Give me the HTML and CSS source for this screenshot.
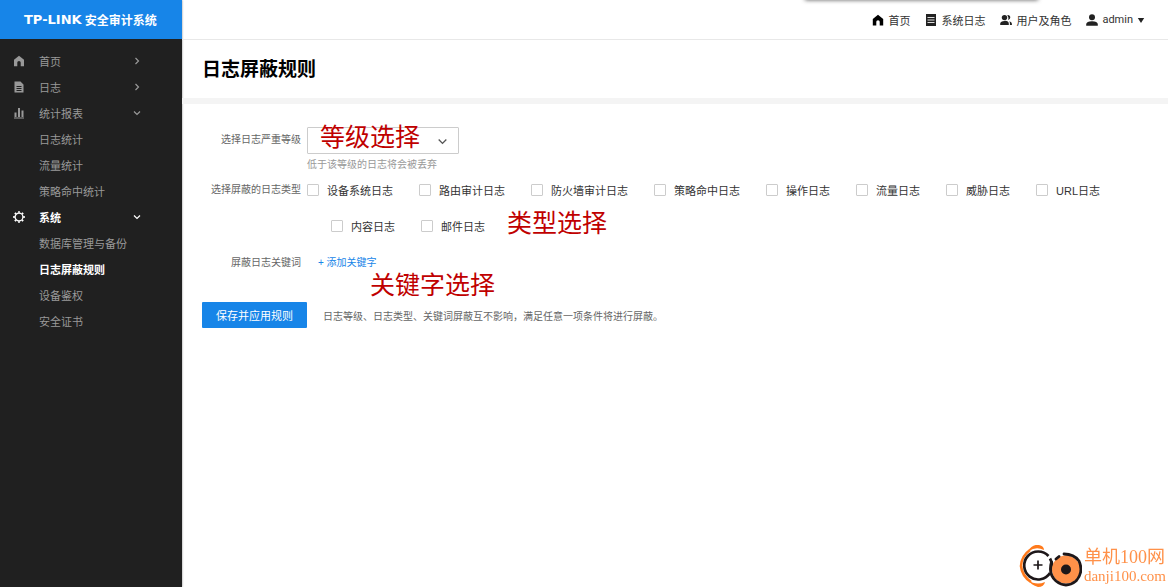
FILE: index.html
```html
<!DOCTYPE html>
<html lang="zh-CN">
<head>
<meta charset="utf-8">
<title>日志屏蔽规则</title>
<link rel="stylesheet" href="styles.css">
</head>
<body>
<div class="app">
  <aside class="sidebar">
    <div class="brand"><span class="brand-mark">TP-LINK</span><span>安全审计系统</span></div>
    <nav class="menu">
      <a class="item" href="#"><svg class="icon" viewBox="0 0 12 12"><path fill="currentColor" d="M6 .8 1 4.8v6.4h3.300V7.600q0-1.500 1.700-1.500t1.700 1.500v3.600H11V4.800z"/></svg><span class="text">首页</span><svg class="arrow" viewBox="0 0 8 8"><path d="M2.500 1l3 3-3 3"/></svg></a>
      <a class="item" href="#"><svg class="icon" viewBox="0 0 12 12"><path fill="currentColor" fill-rule="evenodd" d="M1.500.5h6L10.500 3.500v8h-9zM3.500 5v1h5V5zm0 2v1h5V7zm0 2v1h5V9z"/></svg><span class="text">日志</span><svg class="arrow" viewBox="0 0 8 8"><path d="M2.500 1l3 3-3 3"/></svg></a>
      <a class="item" href="#"><svg class="icon" viewBox="0 0 12 12"><path fill="currentColor" d="M1.500 5.500h2V10h-2zM5 1h2v9H5zm3.500 2.500h2V10h-2zM1 10.600h10v1H1z"/></svg><span class="text">统计报表</span><svg class="arrow" viewBox="0 0 8 8"><path d="M1 2.500l3 3 3-3"/></svg></a>
      <a class="item sub" href="#">日志统计</a>
      <a class="item sub" href="#">流量统计</a>
      <a class="item sub" href="#">策略命中统计</a>
      <a class="item active" href="#"><svg class="icon" viewBox="0 0 12 12"><circle cx="6" cy="6" r="3.900" fill="none" stroke="currentColor" stroke-width="1.300"/><path fill="none" stroke="currentColor" stroke-width="1.900" d="M6 .2v1.600M6 10.200v1.600M.2 6h1.600M10.200 6h1.600M1.900 1.900l1.100 1.100M9 9l1.100 1.100M10.100 1.900 9 3M3 9l-1.100 1.100"/></svg><span class="text">系统</span><svg class="arrow" viewBox="0 0 8 8"><path d="M1 2.500l3 3 3-3"/></svg></a>
      <a class="item sub" href="#">数据库管理与备份</a>
      <a class="item sub active" href="#">日志屏蔽规则</a>
      <a class="item sub" href="#">设备鉴权</a>
      <a class="item sub" href="#">安全证书</a>
    </nav>
  </aside>

  <main class="main">
    <header class="topbar">
      <div class="top-shadow"></div>
      <a class="top-link" href="#"><svg class="icon" viewBox="0 0 12 12"><path fill="#000" d="M6 .8.8 5v6.500h3.500V7.800q0-1.500 1.700-1.500t1.700 1.500v3.700h3.500V5z"/></svg>首页</a>
      <a class="top-link" href="#"><svg class="icon" viewBox="0 0 12 12"><path fill="#222" d="M1 0h10v12H1z"/><path stroke="#ddd" d="M2.500 3.500h7M2.500 6h7M2.500 8.500h7"/></svg>系统日志</a>
      <a class="top-link" href="#"><svg class="icon" viewBox="0 0 12 12"><g fill="#222"><circle cx="4.500" cy="3.600" r="2.700"/><path d="M.2 11V9.500Q.5 7.200 4.500 6.900t4.300 2.600V11zM7.300 1q3-.2 3 2.600 0 1.900-2.300 2.500Q9 3.500 7.300 1zM9.300 7.300q2.600.7 2.600 2.400V11h-2V9.500q0-1.200-.6-2.200z"/></g></svg>用户及角色</a>
      <button class="user" type="button"><svg class="icon" viewBox="0 0 12 12"><circle cx="6" cy="3.300" r="3" fill="#222"/><path fill="#222" d="M.2 11.700V10Q.5 7.500 6 7.200q5.500.3 5.800 2.800v1.700z"/></svg>admin<svg class="caret" viewBox="0 0 8 8"><path fill="#222" d="M.8 2h6.400L4 7z"/></svg></button>
    </header>

    <h1 class="title">日志屏蔽规则</h1>

    <form class="form">
      <div class="row">
        <label class="label level-label" for="level">选择日志严重等级</label>
        <div class="field">
          <div class="select-box">
            <select id="level" class="select"><option></option></select>
            <svg class="select-arrow" viewBox="0 0 8 8"><path d="M.6 2.300 4 5.700l3.400-3.400"/></svg>
            <span class="note note-level">等级选择</span>
          </div>
          <p class="hint">低于该等级的日志将会被丢弃</p>
        </div>
      </div>
      <div class="row" role="group" aria-labelledby="types">
        <span class="label" id="types">选择屏蔽的日志类型</span>
        <div class="field">
          <div class="checks">
            <label class="check"><input type="checkbox">设备系统日志</label>
            <label class="check"><input type="checkbox">路由审计日志</label>
            <label class="check"><input type="checkbox">防火墙审计日志</label>
            <label class="check"><input type="checkbox">策略命中日志</label>
            <label class="check"><input type="checkbox">操作日志</label>
            <label class="check"><input type="checkbox">流量日志</label>
            <label class="check"><input type="checkbox">威胁日志</label>
            <label class="check"><input type="checkbox">URL日志</label>
          </div>
          <div class="checks checks-more">
            <label class="check"><input type="checkbox">内容日志</label>
            <label class="check"><input type="checkbox">邮件日志</label>
            <span class="note note-type">类型选择</span>
          </div>
        </div>
      </div>
      <div class="row keyword-row">
        <span class="label">屏蔽日志关键词</span>
        <div class="field keyword">
          <a class="add" href="#">+ 添加关键字</a>
          <span class="note note-keyword">关键字选择</span>
        </div>
      </div>
      <div class="actions">
        <button class="save" type="button">保存并应用规则</button>
        <span class="remark">日志等级、日志类型、关键词屏蔽互不影响，满足任意一项条件将进行屏蔽。</span>
      </div>
    </form>
  </main>
</div>

<div class="watermark">
  <svg class="wm-logo" viewBox="1 1 64 42">
    <path d="M13 6Q4.500 12 4 22q1 10 10 16" fill="none" stroke="#ff7a1c" stroke-width="2.600"/>
    <path d="M11 7Q15 0 22 1q5 1 5 5-8-4-15 1zM11 36q8 6 17 2-1 5-7 5-7-2-10-7z" fill="#ff7a1c"/>
    <circle cx="21" cy="21" r="14" fill="#fff"/>
    <path d="M31.500 12A14 14 0 1 0 33 29" fill="none" stroke="#1d1719" stroke-width="2.700"/>
    <path d="M33 14.500Q37 22 34 27" fill="none" stroke="#1d1719" stroke-width="2.700"/>
    <path d="M21 16.500v9M16.500 21h9" stroke="#1d1719" stroke-width="1.700"/>
    <circle cx="49" cy="25.500" r="14" fill="#ff9149"/>
    <path d="M34.500 18Q31 30 39 37q10 8 20 0 8-9 3-20-5-7-15-7M39 15l3-2.500" fill="none" stroke="#1d1719" stroke-width="2.800" stroke-linecap="round"/>
    <circle cx="49" cy="25.500" r="5" fill="#1d1719"/>
  </svg>
  <div class="wm-text"><span class="wm-name">单机100网</span><span class="wm-url">danji100.com</span></div>
</div>
</body>
</html>
```
FILE: styles.css
```css
* { box-sizing: border-box; }

body {
  margin: 0;
  background: #fff;
  color: #333;
  font-family: "Liberation Sans", "Noto Sans CJK SC", sans-serif;
  font-size: 11px;
}

a { color: inherit; text-decoration: none; }
button { border: 0; padding: 0; background: none; color: inherit; font: inherit; }

.app { display: flex; min-height: 100vh; }

.sidebar {
  flex: 0 0 182px;
  background: #202020;
  color: #999;
  box-shadow: 0 0 2px #888;
}

.brand {
  display: flex;
  align-items: center;
  gap: 3px;
  height: 39px;
  padding-left: 24px;
  background: #1785e8;
  color: #fff;
  font-weight: bold;
  font-size: 12px;
  white-space: nowrap;
}
.brand-mark { font-family: "DejaVu Sans", sans-serif; font-size: 13px; }

.menu { padding-top: 9px; }
.item {
  display: flex;
  align-items: center;
  height: 26px;
  padding: 0 41px 0 13px;
}
.sub { padding-left: 39px; }
.active { color: #fff; font-weight: bold; }
.icon { flex: none; width: 12px; height: 12px; }
.text { flex: 1; margin-left: 14px; }
.arrow { width: 8px; height: 8px; }
.arrow path, .select-arrow path { fill: none; stroke: currentColor; stroke-width: 1.2; }

.main { flex: 1; min-width: 0; }

.topbar {
  position: relative;
  display: flex;
  align-items: center;
  justify-content: flex-end;
  gap: 15px;
  height: 40px;
  padding-right: 23px;
  border-bottom: 1px solid #e8e8e8;
}
.top-shadow {
  position: absolute;
  top: -4px;
  right: 130px;
  width: 233px;
  height: 4px;
  box-shadow: 0 0 4px #555;
}
.top-link, .user { display: flex; align-items: center; gap: 4px; }
.user { font-family: Roboto, sans-serif; }
.caret { width: 8px; height: 8px; }

.title {
  margin: 0;
  height: 64px;
  padding-left: 20px;
  border-bottom: 6px solid #f4f4f4;
  color: #000;
  font-size: 19px;
  line-height: 60px;
}

.form { padding: 23px 20px; }
.row { display: grid; grid-template-columns: 99px 1fr; column-gap: 6px; }
.label {
  color: #666;
  font-size: 10px;
  line-height: 36px;
  text-align: right;
  white-space: nowrap;
}
.level-label { line-height: 26px; }

.select-box { position: relative; width: 152px; }
.select {
  display: block;
  width: 100%;
  height: 27px;
  padding: 0 24px 0 12px;
  border: 1px solid #ccc;
  border-radius: 1px;
  background: #fff;
  appearance: none;
}
.select-arrow { position: absolute; right: 12px; top: 10px; width: 9px; height: 9px; color: #555; pointer-events: none; }
.hint { margin: 4px 0 0; color: #999; font-size: 10px; line-height: 14px; }

.checks { position: relative; display: flex; flex-wrap: wrap; column-gap: 26px; }
.checks-more { padding-left: 24px; }
.check { display: flex; align-items: center; gap: 8px; height: 36px; padding-bottom: 1px; white-space: nowrap; }
.check input {
  width: 12px;
  height: 12px;
  margin: 0;
  border: 1px solid #ccc;
  border-radius: 1px;
  background: #fff;
  appearance: none;
}
.check input:checked { background: #1785e8; }

.keyword-row { padding-top: 1px; }
.keyword { position: relative; padding-left: 11px; line-height: 36px; }
.add { display: block; color: #1785e8; font-size: 10px; }

.note {
  position: absolute;
  color: #c00000;
  font-size: 25px;
  line-height: 30px;
  white-space: nowrap;
  pointer-events: none;
}
.note-level { left: 13px; top: -5px; }
.note-type { left: 200px; top: 0; }
.note-keyword { left: 63px; top: 25px; }

.actions { display: flex; align-items: center; gap: 16px; margin-top: 21px; }
.save {
  height: 26px;
  padding: 0 14px;
  border-radius: 1px;
  background: #1785e8;
  color: #fff;
}
.remark { color: #666; font-size: 10px; }

.watermark { position: fixed; right: 2px; bottom: 0; display: flex; align-items: center; gap: 2px; }
.wm-logo { width: 64px; height: 42px; }
.wm-text {
  display: flex;
  flex-direction: column;
  color: #ff9149;
  font-family: "Liberation Serif", "Noto Sans CJK SC", serif;
}
.wm-name { font-size: 18px; line-height: 20px; }
.wm-url { font-size: 15px; line-height: 18px; }
```
